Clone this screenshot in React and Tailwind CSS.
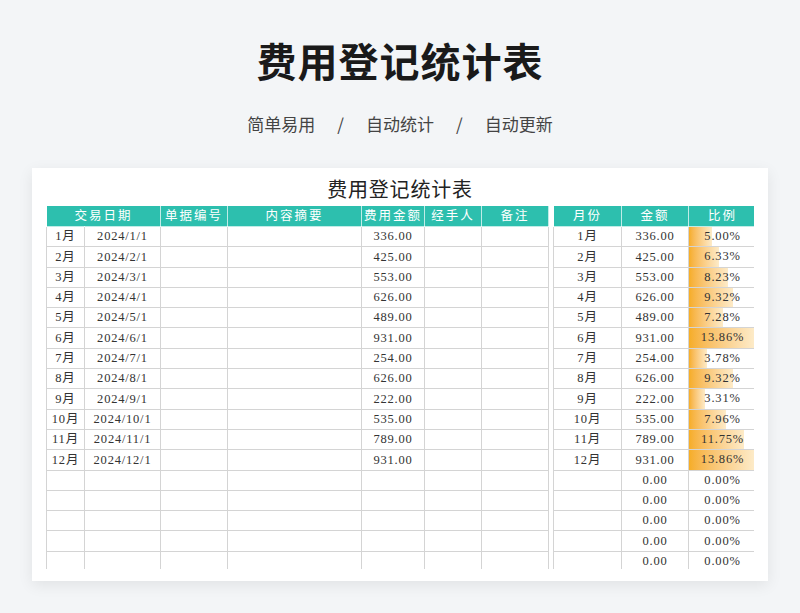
import React from 'react';

const rows = [
  ['1月', '2024/1/1', '336.00', '5.00%', 5.0],
  ['2月', '2024/2/1', '425.00', '6.33%', 6.33],
  ['3月', '2024/3/1', '553.00', '8.23%', 8.23],
  ['4月', '2024/4/1', '626.00', '9.32%', 9.32],
  ['5月', '2024/5/1', '489.00', '7.28%', 7.28],
  ['6月', '2024/6/1', '931.00', '13.86%', 13.86],
  ['7月', '2024/7/1', '254.00', '3.78%', 3.78],
  ['8月', '2024/8/1', '626.00', '9.32%', 9.32],
  ['9月', '2024/9/1', '222.00', '3.31%', 3.31],
  ['10月', '2024/10/1', '535.00', '7.96%', 7.96],
  ['11月', '2024/11/1', '789.00', '11.75%', 11.75],
  ['12月', '2024/12/1', '931.00', '13.86%', 13.86],
];
const empty = [0, 1, 2, 3, 4];

const serif = { fontFamily: '"Liberation Serif","Noto Sans CJK SC",serif' };
const td = 'border border-[#d4d4d4] h-[20.3px] p-0 text-center';
const th = 'border border-white/70 h-[21px] p-0 font-normal text-center text-white tracking-[2px]';

export default function App() {
  return (
    <div className="w-[800px] h-[613px] bg-[#f3f5f7] flex flex-col items-center overflow-hidden" style={{ fontFamily: '"Noto Sans CJK SC",sans-serif' }}>
      <h1 className="mt-[36px] text-[40px] leading-[48px] font-bold text-[#1a1a1a] tracking-[1px]">费用登记统计表</h1>
      <div className="mt-[28px] text-[17px] leading-[24px] text-[#444] flex gap-[22px]">
        <span>简单易用</span><span>/</span><span>自动统计</span><span>/</span><span>自动更新</span>
      </div>
      <div className="mt-[32px] w-[736px] h-[413px] bg-white shadow-[0_4px_14px_rgba(0,0,0,0.08)] px-[14px] pt-[8px] overflow-hidden">
        <div className="h-[393px] overflow-hidden text-[12.5px] tracking-[0.8px] text-[#333]" style={serif}>
          <div className="text-center text-[20px] leading-[29px] text-[#222]">费用登记统计表</div>
          <div className="flex gap-[4px]">
            <table className="border-collapse table-fixed w-[502px]">
              <colgroup>
                <col className="w-[38px]" /><col className="w-[76px]" /><col className="w-[67px]" /><col className="w-[134px]" /><col className="w-[63px]" /><col className="w-[57px]" /><col className="w-[67px]" />
              </colgroup>
              <thead className="bg-[#2dbfae]">
                <tr>
                  <th className={th} colSpan={2}>交易日期</th>
                  <th className={th}>单据编号</th><th className={th}>内容摘要</th><th className={th}>费用金额</th><th className={th}>经手人</th><th className={th}>备注</th>
                </tr>
              </thead>
              <tbody>
                {rows.map(r => (
                  <tr key={r[0]}>
                    <td className={td}>{r[0]}</td><td className={td}>{r[1]}</td><td className={td}></td><td className={td}></td><td className={td}>{r[2]}</td><td className={td}></td><td className={td}></td>
                  </tr>
                ))}
                {empty.map(i => (
                  <tr key={i}>{[0,1,2,3,4,5,6].map(c => <td key={c} className={td}></td>)}</tr>
                ))}
              </tbody>
            </table>
            <table className="border-collapse table-fixed w-[203px]">
              <colgroup><col className="w-[68px]" /><col className="w-[67px]" /><col className="w-[68px]" /></colgroup>
              <thead className="bg-[#2dbfae]">
                <tr><th className={th}>月份</th><th className={th}>金额</th><th className={th}>比例</th></tr>
              </thead>
              <tbody>
                {rows.map(r => (
                  <tr key={r[0]}>
                    <td className={td}>{r[0]}</td><td className={td}>{r[2]}</td>
                    <td className={td}>
                      <div className="relative h-full w-full">
                        <div className="absolute left-0 top-0 bottom-0 bg-gradient-to-r from-[#f6ad25] to-[#fdebc8]" style={{ width: `${(r[4] / 13.86) * 97}%` }} />
                        <span className="relative">{r[3]}</span>
                      </div>
                    </td>
                  </tr>
                ))}
                {empty.map(i => (
                  <tr key={i}><td className={td}></td><td className={td}>0.00</td><td className={td}>0.00%</td></tr>
                ))}
              </tbody>
            </table>
          </div>
        </div>
      </div>
    </div>
  );
}
